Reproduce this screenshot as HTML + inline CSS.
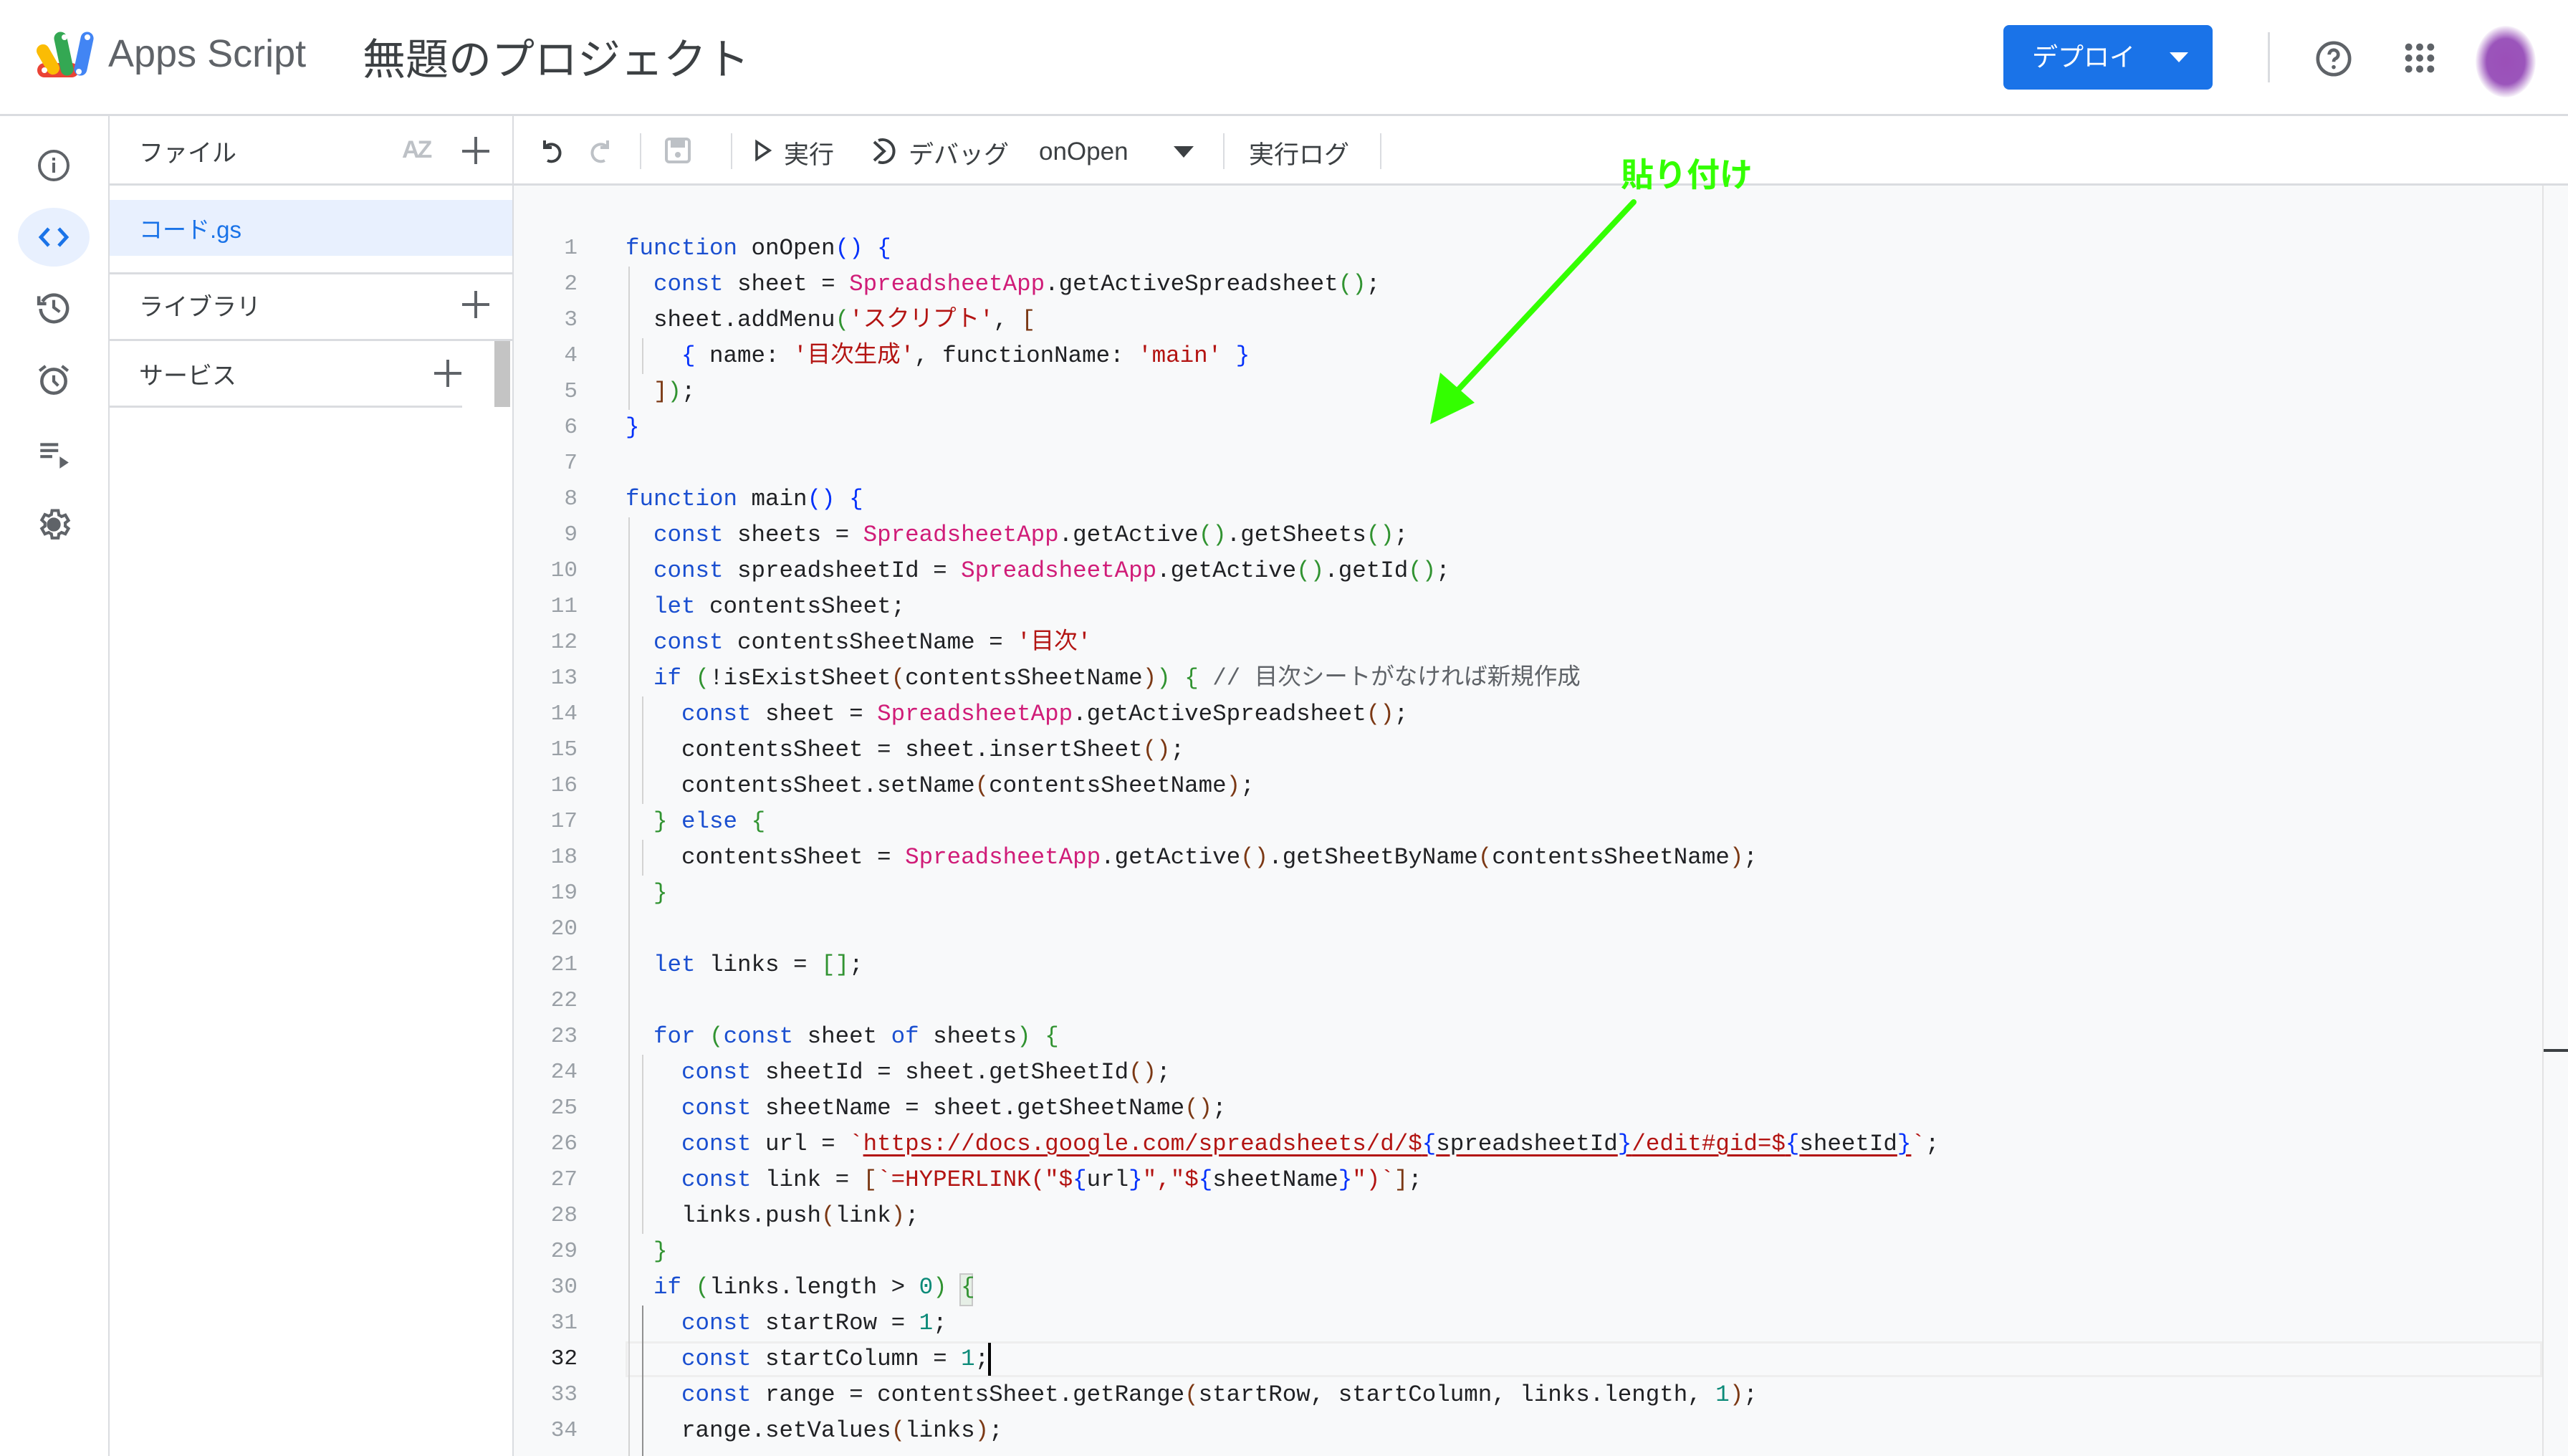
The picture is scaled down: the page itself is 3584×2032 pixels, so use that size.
<!DOCTYPE html>
<html><head><meta charset="utf-8">
<style>
*{margin:0;padding:0;box-sizing:border-box}
body{width:3584px;height:2032px;overflow:hidden;background:#fff;font-family:"Liberation Sans","Noto Sans CJK JP",sans-serif;position:relative;color:#3c4043}
.a{position:absolute}
.hl{background:#dadce0}
.code{position:absolute;left:873px;top:322px;font-family:"Liberation Mono","Noto Sans CJK JP",monospace;font-size:32.5px;line-height:50px;white-space:pre;color:#202124}
.ln{position:absolute;left:740px;top:322px;width:66px;text-align:right;font-family:"Liberation Mono",monospace;font-size:31px;line-height:50px;color:#9aa0a6;white-space:pre}
.k{color:#1a4fd0}.c{color:#d01c78}.s{color:#b31412}.n{color:#0b8a78}.cm{color:#5f6368}
.b1{color:#0431fa}.b2{color:#319331}.b3{color:#7b3814}
.u{text-decoration:underline;text-decoration-color:#b31412;text-decoration-thickness:3px;text-underline-offset:6px}
.tb{position:absolute;top:188px;font-size:35px;color:#3c4043}
.g{position:absolute;width:2px;background:#d3d3d3}
</style></head><body>
<!-- header -->
<svg class="a" style="left:50px;top:40px" width="90" height="72" viewBox="0 0 90 72">
<rect x="2" y="48" width="58" height="20" rx="10" fill="#ea4335"/>
<rect x="8" y="20" width="18" height="46" rx="9" fill="#fbbc04" transform="rotate(-30 17 43)"/>
<rect x="30" y="4" width="18" height="62" rx="9" fill="#34a853" transform="rotate(-12 39 35)"/>
<rect x="58" y="4" width="18" height="62" rx="9" fill="#4285f4" transform="rotate(12 67 35)"/>
<circle cx="12" cy="58" r="4" fill="#fff"/><circle cx="40" cy="12" r="4" fill="#fff"/><circle cx="72" cy="12" r="4" fill="#fff"/><circle cx="60" cy="60" r="4" fill="#fff"/>
</svg>
<div class="a" style="left:151px;top:44px;font-size:54px;color:#5f6368">Apps Script</div>
<div class="a" style="left:506px;top:35px;font-size:60px;color:#3c4043">無題のプロジェクト</div>
<div class="a" style="left:2796px;top:35px;width:292px;height:90px;background:#1a73e8;border-radius:8px;color:#fff;font-size:36px;line-height:90px;padding-left:40px">デプロイ<span style="position:absolute;left:232px;top:38px;border-left:13px solid transparent;border-right:13px solid transparent;border-top:14px solid #fff"></span></div>
<div class="a hl" style="left:3165px;top:45px;width:3px;height:70px"></div>
<svg class="a" style="left:3229px;top:54px" width="56" height="56" viewBox="0 0 24 24"><circle cx="12" cy="12" r="9.5" fill="none" stroke="#5f6368" stroke-width="2"/><path d="M9.3 9.5a2.7 2.7 0 1 1 3.6 2.5c-.7.4-.9.9-.9 1.8" fill="none" stroke="#5f6368" stroke-width="2"/><circle cx="12" cy="17" r="1.2" fill="#5f6368"/></svg>
<svg class="a" style="left:3354px;top:58px" width="46" height="46" viewBox="0 0 24 24" fill="#5f6368"><circle cx="4" cy="4" r="2.6"/><circle cx="12" cy="4" r="2.6"/><circle cx="20" cy="4" r="2.6"/><circle cx="4" cy="12" r="2.6"/><circle cx="12" cy="12" r="2.6"/><circle cx="20" cy="12" r="2.6"/><circle cx="4" cy="20" r="2.6"/><circle cx="12" cy="20" r="2.6"/><circle cx="20" cy="20" r="2.6"/></svg>
<div class="a" style="left:3455px;top:36px;width:84px;height:100px;border-radius:50%;background:radial-gradient(ellipse at center,#9b4fb8 0%,#9b55bb 45%,rgba(160,90,190,0) 72%)"></div>
<div class="a hl" style="left:0;top:159px;width:3584px;height:3px"></div>
<!-- rail -->
<div class="a hl" style="left:151px;top:162px;width:2px;height:1870px"></div>
<svg class="a" style="left:51px;top:207px" width="48" height="48" viewBox="0 0 24 24"><circle cx="12" cy="12" r="10" fill="none" stroke="#5f6368" stroke-width="2"/><rect x="11" y="10" width="2" height="7" fill="#5f6368"/><rect x="11" y="6.5" width="2" height="2" fill="#5f6368"/></svg>
<div class="a" style="left:25px;top:290px;width:100px;height:82px;border-radius:50%;background:#e8f0fe"></div>
<svg class="a" style="left:50px;top:311px" width="50" height="40" viewBox="0 0 25 20"><path d="M9 4 3.5 10 9 16M16 4l5.5 6-5.5 6" fill="none" stroke="#1a73e8" stroke-width="2.4"/></svg>
<svg class="a" style="left:50px;top:404px" width="50" height="50" viewBox="0 0 24 24"><path d="M4.5 8A9 9 0 1 1 3.2 13" fill="none" stroke="#5f6368" stroke-width="2.2"/><path d="M2 4.5v5h5" fill="none" stroke="#5f6368" stroke-width="2.2"/><path d="M12 7v5l4 3" fill="none" stroke="#5f6368" stroke-width="2"/></svg>
<svg class="a" style="left:50px;top:505px" width="50" height="50" viewBox="0 0 24 24"><circle cx="12" cy="13" r="8" fill="none" stroke="#5f6368" stroke-width="2.2"/><path d="M12 9v4l3 3M2.5 6 6.5 2.8M21.5 6l-4-3.2" fill="none" stroke="#5f6368" stroke-width="2"/></svg>
<svg class="a" style="left:50px;top:608px" width="50" height="50" viewBox="0 0 24 24"><path d="M3 6h12M3 10h12M3 14h8" stroke="#5f6368" stroke-width="2"/><path d="M16 14v8l6-4z" fill="#5f6368"/></svg>
<svg class="a" style="left:49px;top:706px" width="52" height="52" viewBox="0 0 24 24"><path d="M12 8.5a3.5 3.5 0 1 0 0 7 3.5 3.5 0 0 0 0-7zM19.4 13a7.6 7.6 0 0 0 0-2l2.1-1.6-2-3.5-2.5 1a7 7 0 0 0-1.7-1L14.9 3h-4l-.4 2.6a7 7 0 0 0-1.7 1l-2.5-1-2 3.5L6.4 11a7.6 7.6 0 0 0 0 2l-2.1 1.6 2 3.5 2.5-1a7 7 0 0 0 1.7 1l.4 2.6h4l.4-2.6a7 7 0 0 0 1.7-1l2.5 1 2-3.5z" fill="none" stroke="#5f6368" stroke-width="1.9"/><circle cx="12" cy="12" r="3" fill="#5f6368"/></svg>
<!-- files panel -->
<div class="a hl" style="left:715px;top:162px;width:2px;height:1870px"></div>
<div class="a" style="left:194px;top:186px;font-size:34px">ファイル</div>
<div class="a" style="left:561px;top:190px;font-size:34px;color:#bdc1c6;font-weight:bold;letter-spacing:-3px">AZ</div>
<div class="a" style="left:645px;top:209px;width:38px;height:4px;background:#5f6368"></div><div class="a" style="left:662px;top:191px;width:4px;height:38px;background:#5f6368"></div>
<div class="a hl" style="left:153px;top:256px;width:562px;height:3px"></div>
<div class="a" style="left:153px;top:279px;width:562px;height:78px;background:#e8f0fe"></div>
<div class="a" style="left:194px;top:294px;font-size:33px;color:#1a73e8">コード.gs</div>
<div class="a hl" style="left:153px;top:380px;width:562px;height:3px"></div>
<div class="a" style="left:194px;top:401px;font-size:34px">ライブラリ</div>
<div class="a" style="left:645px;top:423px;width:38px;height:4px;background:#5f6368"></div><div class="a" style="left:662px;top:406px;width:4px;height:38px;background:#5f6368"></div>
<div class="a hl" style="left:153px;top:473px;width:562px;height:3px"></div>
<div class="a" style="left:194px;top:497px;font-size:34px">サービス</div>
<div class="a" style="left:606px;top:519px;width:38px;height:4px;background:#5f6368"></div><div class="a" style="left:623px;top:502px;width:4px;height:38px;background:#5f6368"></div>
<div class="a" style="left:690px;top:476px;width:22px;height:92px;background:#c4c4c4"></div>
<div class="a hl" style="left:153px;top:566px;width:492px;height:3px"></div>
<!-- toolbar -->
<svg class="a" style="left:752px;top:190px" width="36" height="40" viewBox="0 0 18 20"><path d="M4 3v5h5M4 8a6 6 0 1 1 2 9" fill="none" stroke="#3c4043" stroke-width="2"/></svg>
<svg class="a" style="left:820px;top:190px" width="36" height="40" viewBox="0 0 18 20"><path d="M14 3v5H9M14 8a6 6 0 1 0-2 9" fill="none" stroke="#bdc1c6" stroke-width="2"/></svg>
<div class="a hl" style="left:893px;top:186px;width:2px;height:50px"></div>
<svg class="a" style="left:926px;top:190px" width="40" height="40" viewBox="0 0 20 20"><rect x="2" y="2" width="16" height="16" rx="2" fill="none" stroke="#bdc1c6" stroke-width="2"/><rect x="5" y="3" width="10" height="5" fill="#bdc1c6"/><circle cx="10" cy="13" r="2" fill="#bdc1c6"/></svg>
<div class="a hl" style="left:1020px;top:186px;width:2px;height:50px"></div>
<svg class="a" style="left:1052px;top:194px" width="26" height="32" viewBox="0 0 13 16"><path d="M2 2v12l9-6z" fill="none" stroke="#3c4043" stroke-width="1.8"/></svg>
<div class="tb" style="left:1094px">実行</div>
<svg class="a" style="left:1212px;top:190px" width="42" height="42" viewBox="0 0 21 21"><path d="M4 4l7 6.5L4 17" fill="none" stroke="#3c4043" stroke-width="2"/><path d="M7 3a8 8 0 1 1 0 15" fill="none" stroke="#3c4043" stroke-width="2"/></svg>
<div class="tb" style="left:1268px">デバッグ</div>
<div class="tb" style="left:1450px;top:192px">onOpen</div>
<div class="a" style="left:1638px;top:204px;border-left:14px solid transparent;border-right:14px solid transparent;border-top:16px solid #3c4043"></div>
<div class="a hl" style="left:1707px;top:186px;width:2px;height:50px"></div>
<div class="tb" style="left:1743px">実行ログ</div>
<div class="a hl" style="left:1926px;top:186px;width:2px;height:50px"></div>
<div class="a hl" style="left:717px;top:256px;width:2867px;height:3px"></div>
<!-- editor -->
<div class="a" style="left:717px;top:259px;width:2867px;height:1773px;background:#f8f9fa"></div>
<div class="a" style="left:3548px;top:259px;width:2px;height:1773px;background:#e3e3e3"></div>
<div class="a" style="left:3550px;top:1464px;width:34px;height:4px;background:#3c4043"></div>
<div class="a" style="left:873px;top:1872px;width:2675px;height:50px;border:3px solid #eeeeee"></div>
<div class="a" style="left:1379px;top:1874px;width:4px;height:46px;background:#000"></div>
<div class="a" style="left:1339px;top:1777px;width:19px;height:46px;border:2px solid #c8c8c8;background:#e6efe6"></div>
<!-- indent guides -->
<div class="g" style="left:877px;top:372px;height:200px"></div>
<div class="g" style="left:896px;top:472px;height:50px"></div>
<div class="g" style="left:877px;top:722px;height:1310px"></div>
<div class="g" style="left:896px;top:972px;height:150px"></div>
<div class="g" style="left:896px;top:1172px;height:50px"></div>
<div class="g" style="left:896px;top:1472px;height:250px"></div>
<div class="g" style="left:896px;top:1822px;height:210px;background:#909090"></div>
<div class="ln">1
2
3
4
5
6
7
8
9
10
11
12
13
14
15
16
17
18
19
20
21
22
23
24
25
26
27
28
29
30
31
<span style="color:#202124">32</span>
33
34</div>
<div class="code"><span class="k">function</span> onOpen<span class="b1">()</span> <span class="b1">{</span>
  <span class="k">const</span> sheet = <span class="c">SpreadsheetApp</span>.getActiveSpreadsheet<span class="b2">()</span>;
  sheet.addMenu<span class="b2">(</span><span class="s">'スクリプト'</span>, <span class="b3">[</span>
    <span class="b1">{</span> name: <span class="s">'目次生成'</span>, functionName: <span class="s">'main'</span> <span class="b1">}</span>
  <span class="b3">]</span><span class="b2">)</span>;
<span class="b1">}</span>

<span class="k">function</span> main<span class="b1">()</span> <span class="b1">{</span>
  <span class="k">const</span> sheets = <span class="c">SpreadsheetApp</span>.getActive<span class="b2">()</span>.getSheets<span class="b2">()</span>;
  <span class="k">const</span> spreadsheetId = <span class="c">SpreadsheetApp</span>.getActive<span class="b2">()</span>.getId<span class="b2">()</span>;
  <span class="k">let</span> contentsSheet;
  <span class="k">const</span> contentsSheetName = <span class="s">'目次'</span>
  <span class="k">if</span> <span class="b2">(</span>!isExistSheet<span class="b3">(</span>contentsSheetName<span class="b3">)</span><span class="b2">)</span> <span class="b2">{</span> <span class="cm">// 目次シートがなければ新規作成</span>
    <span class="k">const</span> sheet = <span class="c">SpreadsheetApp</span>.getActiveSpreadsheet<span class="b3">()</span>;
    contentsSheet = sheet.insertSheet<span class="b3">()</span>;
    contentsSheet.setName<span class="b3">(</span>contentsSheetName<span class="b3">)</span>;
  <span class="b2">}</span> <span class="k">else</span> <span class="b2">{</span>
    contentsSheet = <span class="c">SpreadsheetApp</span>.getActive<span class="b3">()</span>.getSheetByName<span class="b3">(</span>contentsSheetName<span class="b3">)</span>;
  <span class="b2">}</span>

  <span class="k">let</span> links = <span class="b2">[]</span>;

  <span class="k">for</span> <span class="b2">(</span><span class="k">const</span> sheet <span class="k">of</span> sheets<span class="b2">)</span> <span class="b2">{</span>
    <span class="k">const</span> sheetId = sheet.getSheetId<span class="b3">()</span>;
    <span class="k">const</span> sheetName = sheet.getSheetName<span class="b3">()</span>;
    <span class="k">const</span> url = <span class="s">`</span><span class="s u">https://docs.google.com/spreadsheets/d/$<span class="b1">{</span><span style="color:#202124">spreadsheetId</span><span class="b1">}</span>/edit#gid=$<span class="b1">{</span><span style="color:#202124">sheetId</span><span class="b1">}</span></span><span class="s">`</span>;
    <span class="k">const</span> link = <span class="b3">[</span><span class="s">`=HYPERLINK("$<span class="b1">{</span><span style="color:#202124">url</span><span class="b1">}</span>","$<span class="b1">{</span><span style="color:#202124">sheetName</span><span class="b1">}</span>")`</span><span class="b3">]</span>;
    links.push<span class="b3">(</span>link<span class="b3">)</span>;
  <span class="b2">}</span>
  <span class="k">if</span> <span class="b2">(</span>links.length &gt; <span class="n">0</span><span class="b2">)</span> <span class="b2">{</span>
    <span class="k">const</span> startRow = <span class="n">1</span>;
    <span class="k">const</span> startColumn = <span class="n">1</span>;
    <span class="k">const</span> range = contentsSheet.getRange<span class="b3">(</span>startRow, startColumn, links.length, <span class="n">1</span><span class="b3">)</span>;
    range.setValues<span class="b3">(</span>links<span class="b3">)</span>;</div>
<!-- annotation -->
<div class="a" style="left:2262px;top:208px;font-size:46px;font-weight:bold;color:#33ff00;font-family:'Noto Sans CJK JP',sans-serif">貼り付け</div>
<svg class="a" style="left:1980px;top:270px" width="320" height="340" viewBox="0 0 320 340"><path d="M300 12 40 290" stroke="#33ff00" stroke-width="8" stroke-linecap="round"/><path d="M16 322 30 250 78 292z" fill="#33ff00"/></svg>
</body></html>
